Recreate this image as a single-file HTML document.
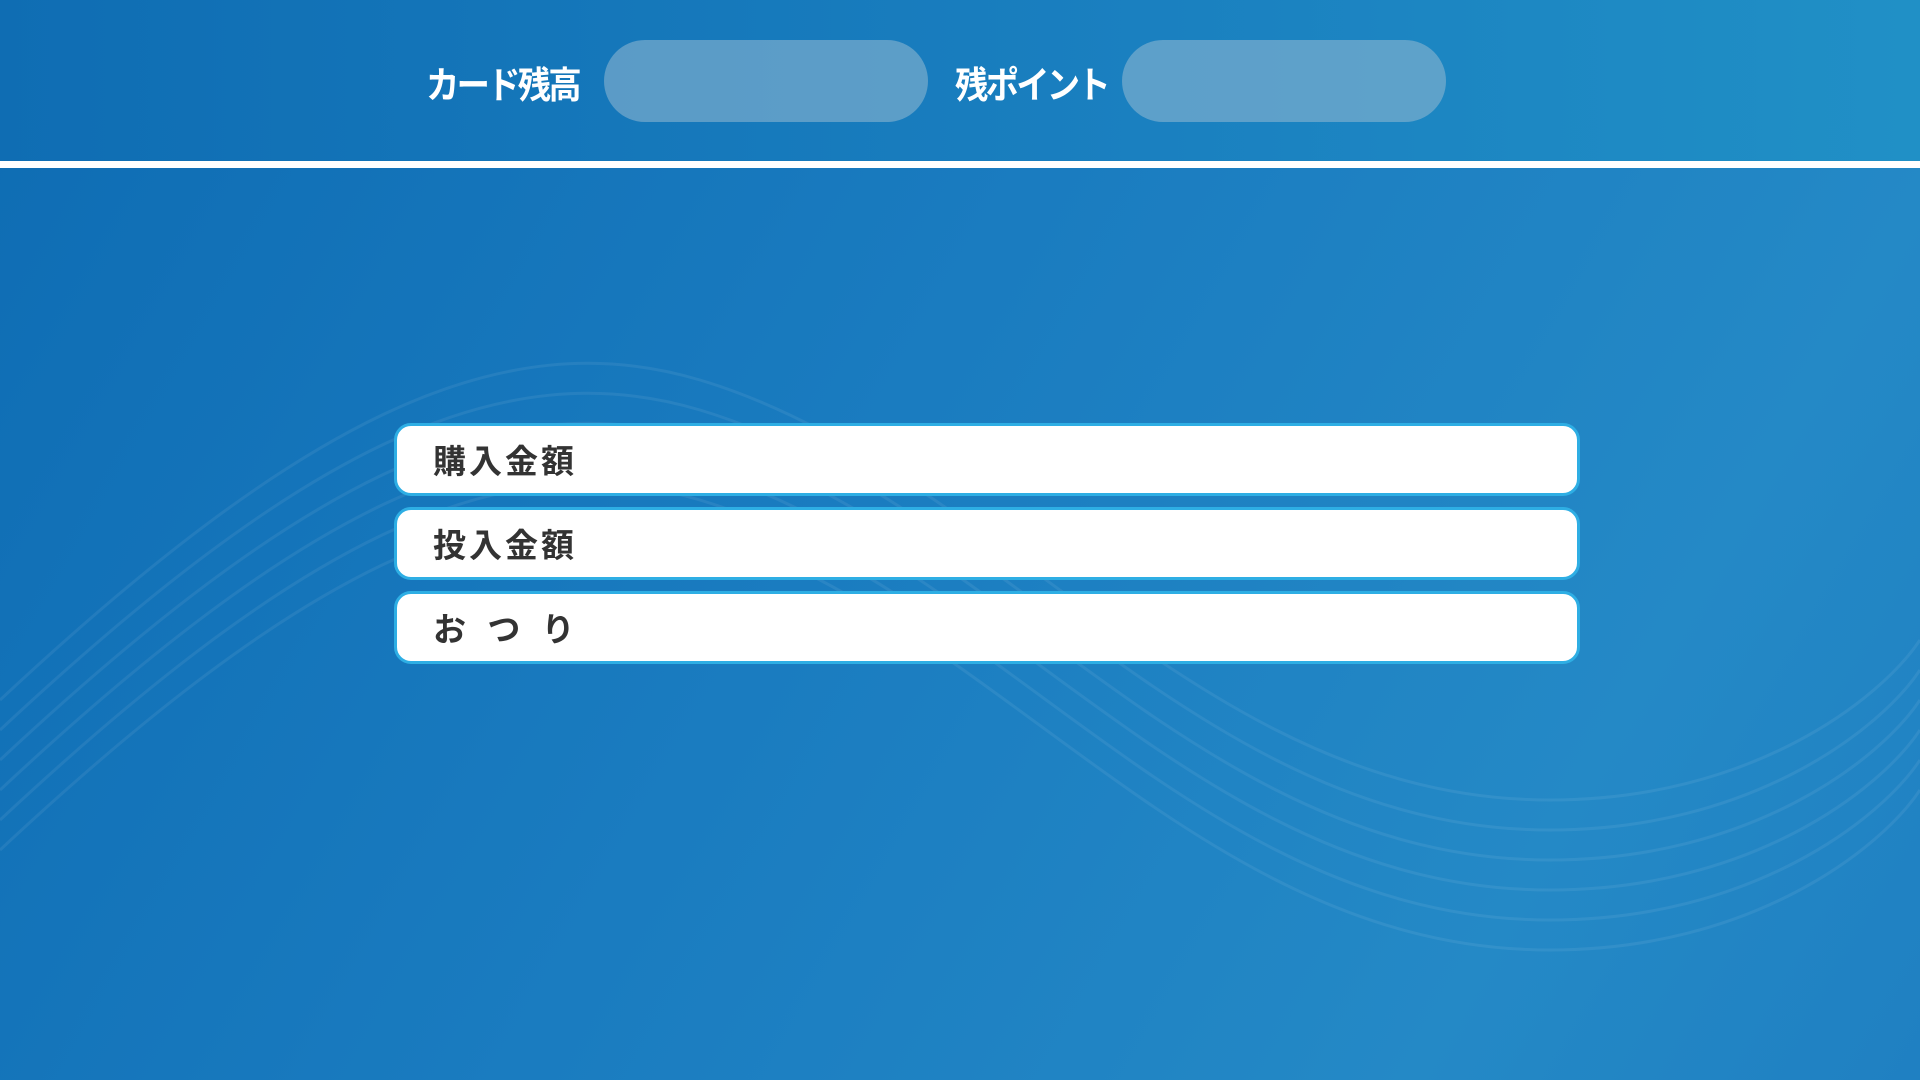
<!DOCTYPE html>
<html><head><meta charset="utf-8"><style>
html,body{margin:0;padding:0;width:1920px;height:1080px;overflow:hidden;}
body{position:relative;background:linear-gradient(120deg,#0e6cb3 0%,#1a7cc0 45%,#2489c6 80%,#1f80c2 100%);font-family:"Liberation Sans","Noto Sans CJK JP",sans-serif;}
.hdr{position:absolute;left:0;top:0;width:1920px;height:161px;background:linear-gradient(90deg,#0f6db3,#1a80c0 60%,#2090c6);}
.line{position:absolute;left:0;top:161px;width:1920px;height:7px;background:#fff;}
.lbl{position:absolute;top:61px;color:#fff;font-size:37px;font-weight:bold;letter-spacing:-3px;line-height:50px;transform:scaleX(0.9);transform-origin:left center;}
.pill{position:absolute;top:40px;height:82px;width:324px;border-radius:41px;background:rgba(150,185,210,0.55);}
.row{position:absolute;left:394px;width:1180px;height:67px;border:3px solid #2eaee4;border-radius:17px;background:#fff;}
.row span{position:absolute;left:36px;top:2px;line-height:67px;font-size:33px;font-weight:bold;color:#333;letter-spacing:3px;}
svg{position:absolute;left:0;top:0;}
</style></head><body>
<svg width="1920" height="1080">
<g fill="none" stroke="rgba(255,255,255,0.07)" stroke-width="3">
<path d="M0 700 C300 420 500 320 700 380 C1000 470 1200 800 1550 800 C1750 800 1880 700 1920 640"/>
<path d="M0 730 C300 450 500 350 700 410 C1000 500 1200 830 1550 830 C1750 830 1880 730 1920 670"/>
<path d="M0 760 C300 480 500 380 700 440 C1000 530 1200 860 1550 860 C1750 860 1880 760 1920 700"/>
<path d="M0 790 C300 510 500 410 700 470 C1000 560 1200 890 1550 890 C1750 890 1880 790 1920 730"/>
<path d="M0 820 C300 540 500 440 700 500 C1000 590 1200 920 1550 920 C1750 920 1880 820 1920 760"/>
<path d="M0 850 C300 570 500 470 700 530 C1000 620 1200 950 1550 950 C1750 950 1880 850 1920 790"/>
</g></svg>
<div class="hdr"></div>
<div class="line"></div>
<div class="lbl" style="left:426px">カード残高</div>
<div class="pill" style="left:604px"></div>
<div class="lbl" style="left:955px">残ポイント</div>
<div class="pill" style="left:1122px"></div>
<div class="row" style="top:423px"><span>購入金額</span></div>
<div class="row" style="top:507px"><span>投入金額</span></div>
<div class="row" style="top:591px"><span style="letter-spacing:1px">お&nbsp;&nbsp;つ&nbsp;&nbsp;り</span></div>
</body></html>
